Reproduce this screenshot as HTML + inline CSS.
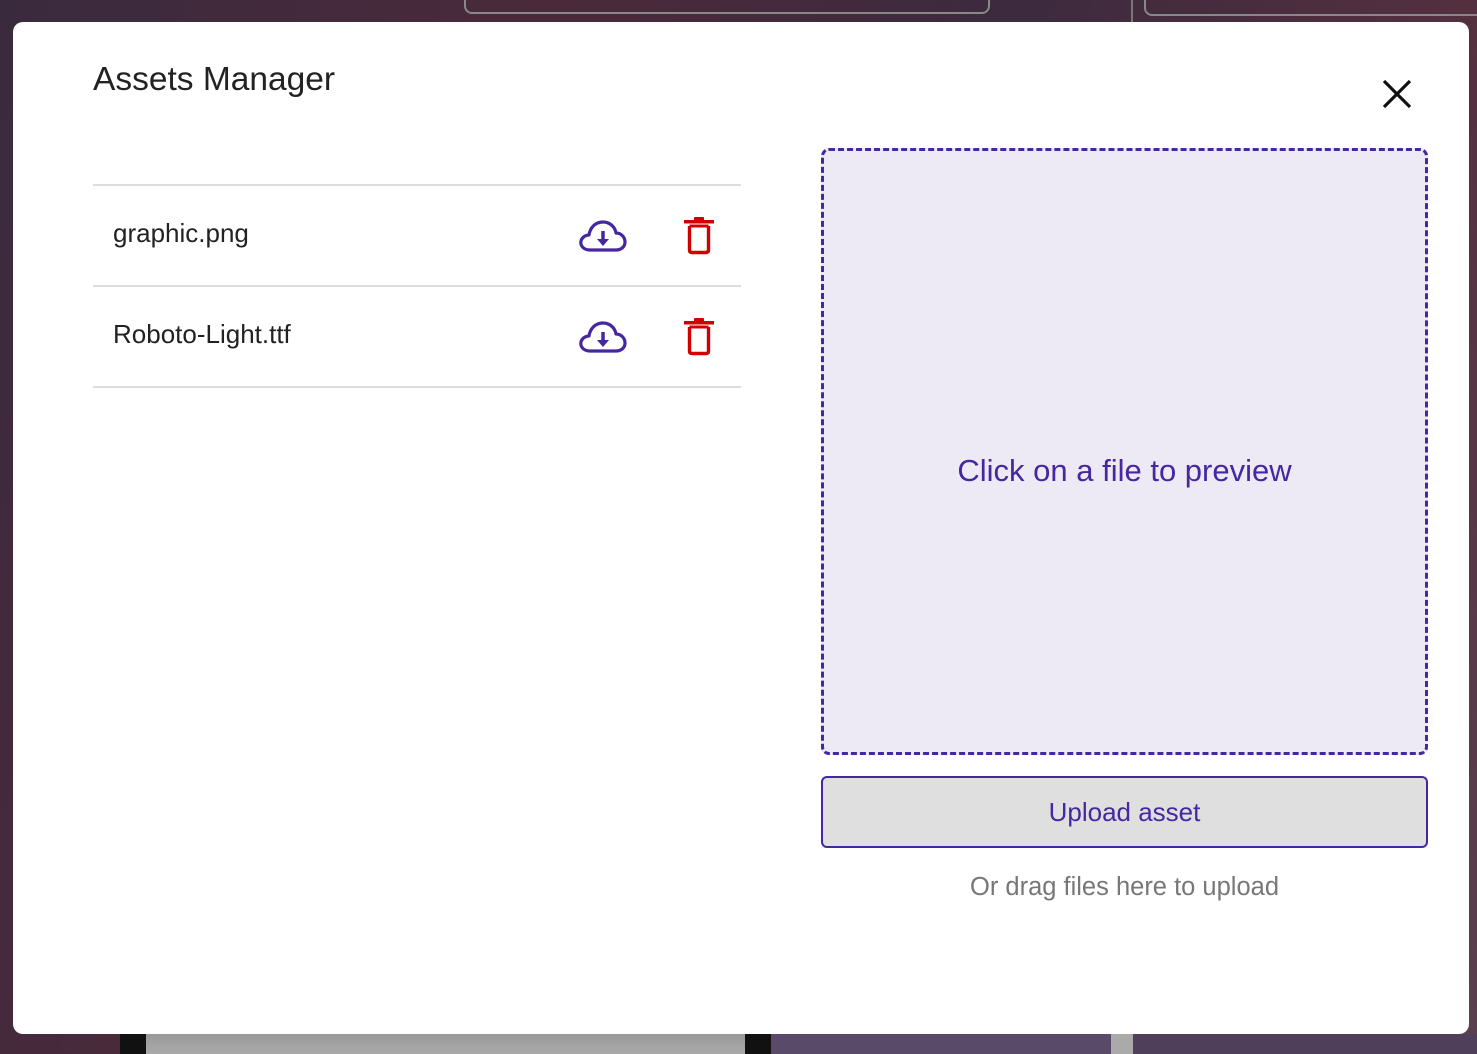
<!DOCTYPE html>
<html><head><meta charset="utf-8"><style>
html,body{margin:0;padding:0;width:1477px;height:1054px;overflow:hidden;font-family:"Liberation Sans",sans-serif;}
body{background:linear-gradient(110deg,#3a2a3e 0%,#4a2a3a 30%,#3d2a3e 55%,#55303f 80%,#5a4050 100%);position:relative;}
.bgbox{position:absolute;border:2px solid #888;border-top:none;border-radius:0 0 8px 8px;}
.modal{position:absolute;left:13px;top:22px;width:1456px;height:1012px;background:#fff;border-radius:10px;}
.title{position:absolute;left:80px;top:39px;font-size:33.5px;color:#222;}
.close{position:absolute;left:1368px;top:56px;}
.list{position:absolute;left:80px;top:162px;width:648px;}
.row{height:99px;border-top:2px solid #ddd;position:relative;}
.row:last-child{border-bottom:2px solid #ddd;}
.row .name{position:absolute;left:20px;top:32px;font-size:26px;color:#222;}
.row .dl{position:absolute;left:485px;top:30px;}
.row .del{position:absolute;left:590px;top:30px;}
.drop{position:absolute;left:808px;top:126px;width:601px;height:601px;border:3px dashed #4527a0;border-radius:8px;background:#edeaf5;}
.drop span{position:absolute;left:0;right:0;top:302px;text-align:center;font-size:31px;color:#4527a0;}
.btn{position:absolute;left:808px;top:754px;width:603px;height:68px;border:2px solid #4527a0;border-radius:6px;background:#dfdfdf;color:#4527a0;font-size:26px;text-align:center;line-height:68px;}
.hint{position:absolute;left:808px;top:851px;width:607px;text-align:center;font-size:25.5px;color:#777;}
</style></head><body>
<div class="bgbox" style="left:464px;top:-10px;width:522px;height:22px;"></div>
<div class="bgbox" style="left:1144px;top:-10px;width:340px;height:24px;"></div>
<div style="position:absolute;left:1131px;top:0;width:2px;height:22px;background:#777"></div>
<div style="position:absolute;left:120px;top:1034px;width:26px;height:20px;background:#111"></div>
<div style="position:absolute;left:146px;top:1034px;width:600px;height:20px;background:linear-gradient(#999,#aaa)"></div>
<div style="position:absolute;left:745px;top:1034px;width:26px;height:20px;background:#111"></div>
<div style="position:absolute;left:771px;top:1034px;width:340px;height:20px;background:#5a4a6a"></div>
<div style="position:absolute;left:1111px;top:1034px;width:22px;height:20px;background:#aaa"></div>
<div style="position:absolute;left:1133px;top:1034px;width:344px;height:20px;background:#4f3f5a"></div>
<div class="modal">
  <div class="title">Assets Manager</div>
  <svg class="close" width="32" height="32" viewBox="0 0 32 32"><path d="M3 3L29 29M29 3L3 29" stroke="#111" stroke-width="3.2"/></svg>
  <div class="list">
    <div class="row"><div class="name">graphic.png</div>
      <svg class="dl" width="50" height="40" viewBox="0 0 50 40"><path d="M12 34C5 34 2 29 3 25C4 21 8 19 11 19C12 12 17 6 25 6C32 6 37 11 38 17C43 17 47 21 47 26C47 31 43 34 38 34Z" fill="none" stroke="#4527a0" stroke-width="3.2" stroke-linejoin="round"/><path d="M25 15V26" stroke="#4527a0" stroke-width="3.5"/><path d="M19 23L25 30L31 23Z" fill="#4527a0"/></svg>
      <svg class="del" width="32" height="40" viewBox="0 0 32 40"><rect x="1" y="4" width="30" height="3.5" fill="#d00000"/><rect x="11" y="1" width="10" height="4" rx="1" fill="#d00000"/><path d="M6.5 10V34Q6.5 36.5 9 36.5H23Q25.5 36.5 25.5 34V10" fill="none" stroke="#d00000" stroke-width="3.4"/><path d="M6.5 10H25.5" stroke="#d00000" stroke-width="3"/></svg>
    </div>
    <div class="row"><div class="name">Roboto-Light.ttf</div>
      <svg class="dl" width="50" height="40" viewBox="0 0 50 40"><path d="M12 34C5 34 2 29 3 25C4 21 8 19 11 19C12 12 17 6 25 6C32 6 37 11 38 17C43 17 47 21 47 26C47 31 43 34 38 34Z" fill="none" stroke="#4527a0" stroke-width="3.2" stroke-linejoin="round"/><path d="M25 15V26" stroke="#4527a0" stroke-width="3.5"/><path d="M19 23L25 30L31 23Z" fill="#4527a0"/></svg>
      <svg class="del" width="32" height="40" viewBox="0 0 32 40"><rect x="1" y="4" width="30" height="3.5" fill="#d00000"/><rect x="11" y="1" width="10" height="4" rx="1" fill="#d00000"/><path d="M6.5 10V34Q6.5 36.5 9 36.5H23Q25.5 36.5 25.5 34V10" fill="none" stroke="#d00000" stroke-width="3.4"/><path d="M6.5 10H25.5" stroke="#d00000" stroke-width="3"/></svg>
    </div>
  </div>
  <div class="drop"><span>Click on a file to preview</span></div>
  <div class="btn">Upload asset</div>
  <div class="hint">Or drag files here to upload</div>
</div>
</body></html>
